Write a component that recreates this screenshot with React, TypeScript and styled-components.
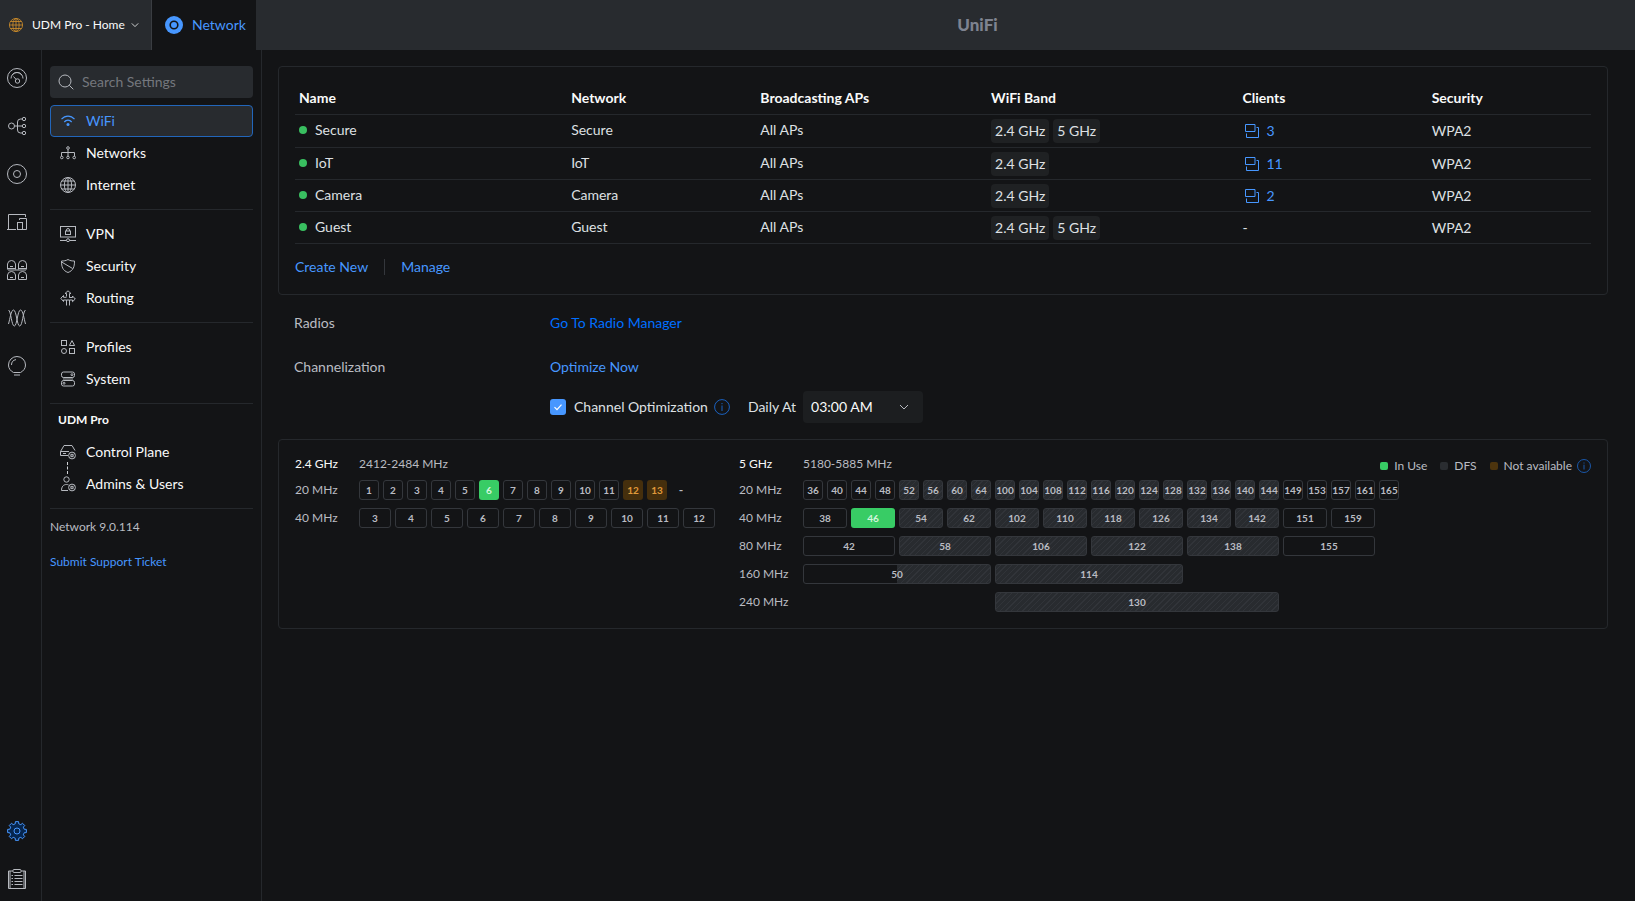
import React from "react";
import styled, { createGlobalStyle, css } from "styled-components";

const color = {
  bg: "#131416",
  bar: "#282b2f",
  line: "#25282c",
  text: "#f9fafa",
  textSoft: "#dee0e3",
  muted: "#babcc2",
  link: "#4797ff",
  linkDeep: "#006fff",
  green: "#38cc65",
  icon: "#b6b9bf",
};

const GlobalStyle = createGlobalStyle`
  *, *::before, *::after { box-sizing: border-box; }
  body {
    margin: 0;
    background: ${color.bg};
    color: ${color.textSoft};
    font-family: Lato, "Noto Sans", sans-serif;
    font-size: 14px;
    line-height: 20px;
  }
  button, input, select { font: inherit; color: inherit; }
  button { background: none; border: 0; padding: 0; cursor: pointer; }
  a { color: ${color.link}; text-decoration: none; }
`;

/* ---------- icons ---------- */

const Glyph = styled.svg`
  display: block;
  flex: none;
  fill: none;
  stroke: currentColor;
  stroke-width: 1;
`;

type IconProps = { size?: number; children?: React.ReactNode };

const Icon = ({ size = 20, children }: IconProps) => (
  <Glyph width={size} height={size} viewBox={`0 0 ${size} ${size}`} aria-hidden="true">
    {children}
  </Glyph>
);

const GlobeIcon = ({ size = 16 }: { size?: number }) => (
  <Glyph width={size} height={size} viewBox="0 0 16 16" aria-hidden="true">
    <circle cx="8" cy="8" r="7.5" />
    <ellipse cx="8" cy="8" rx="3.6" ry="7.5" />
    <path d="M8 .5v15M.5 8h15M1.8 4h12.4M1.8 12h12.4" />
  </Glyph>
);

const ChevronIcon = ({ size = 10 }: { size?: number }) => (
  <Glyph width={size} height={size} viewBox="0 0 10 10" aria-hidden="true">
    <path d="M1 3l4 4 4-4" />
  </Glyph>
);

const NetworkAppIcon = () => (
  <Icon size={18}>
    <circle cx="9" cy="9" r="9" fill={color.link} stroke="none" />
    <circle cx="9" cy="9" r="3.8" stroke={color.bg} strokeWidth="1.6" />
  </Icon>
);

const DashboardIcon = () => (
  <Icon>
    <circle cx="10" cy="10" r="9.5" />
    <path d="M4 10.5a6 6 0 0 1 12 0M5 7.2c2.4-3.600 7.600-3.600 10 0" />
    <circle cx="10.5" cy="13" r="2.2" />
    <path d="M9 11.3L6.5 8.5" />
  </Icon>
);

const TopologyIcon = () => (
  <Icon>
    <circle cx="4.5" cy="10" r="3" />
    <circle cx="17" cy="3" r="1.7" />
    <circle cx="17" cy="10" r="1.7" />
    <circle cx="17" cy="17" r="1.7" />
    <path d="M7.5 10h7.8M15.3 3h-1.8q-3 0-3 3v8q0 3 3 3h1.8" />
  </Icon>
);

const DevicesIcon = () => (
  <Icon>
    <circle cx="10" cy="10" r="9.5" />
    <circle cx="10" cy="10" r="3.5" />
  </Icon>
);

const ClientsIcon = () => (
  <Icon>
    <path d="M1.5 15V2.5h17V5M0 17.5h9M1.5 15v2.5" />
    <path d="M12.5 8V6.5h7v11H16" />
    <rect x="10.5" y="10.5" width="5" height="7" />
  </Icon>
);

const PortsIcon = () => (
  <Icon>
    {[0, 11].map((x) => (
      <g key={x} transform={`translate(${x} 0)`}>
        <path d="M.5 9.5V4Q1 .5 4.500 .5T8.500 4v5.500M.5 19.500V15q.5-3.500 4-3.500t4 3.500v4.500z" />
        <path d="M.5 8.500h8M3 6.500h3M3 17.500h3" />
      </g>
    ))}
    <path d="M1 10h18" strokeWidth="2" strokeOpacity=".5" />
  </Icon>
);

const RadiosIcon = () => (
  <Icon>
    <path d="M1.5 2C4 3 4.500 18 7.300 18S10.500 2 13.500 2c2.500 0 3.500 9 5 14" />
    <path d="M18.500 2C16 3 15.500 18 12.700 18S9.500 2 6.500 2C4 2 3 11 1.500 16" />
  </Icon>
);

const BulbIcon = () => (
  <Icon>
    <path d="M6.5 16.5C3.5 15 1.5 12.3 1.5 9a8.5 8.5 0 0 1 17 0c0 3.3-2 6-5 7.500zM7 19h6M4.500 9A5.500 5.500 0 0 1 9 3.600" />
  </Icon>
);

const gearPath = (() => {
  const teeth = 8;
  const pts: string[] = [];
  for (let i = 0; i < teeth; i++) {
    const mid = (i * 2 * Math.PI) / teeth;
    [[-0.24, 7.4], [-0.17, 9.5], [0.17, 9.5], [0.24, 7.4]].forEach(([offset, radius]) => {
      const a = mid + offset;
      pts.push(`${(10 + radius * Math.sin(a)).toFixed(2)} ${(10 - radius * Math.cos(a)).toFixed(2)}`);
    });
  }
  return `M${pts.join("L")}Z`;
})();

const GearIcon = () => (
  <Icon>
    <path d={gearPath} fill="#06264f" strokeLinejoin="round" />
    <circle cx="10" cy="10" r="3" />
  </Icon>
);

const ClipboardIcon = () => (
  <Icon>
    <path d="M6 2H1.5v17.5h17V2H14M3 2v17M17 2v17" />
    <rect x="6" y=".5" width="8" height="3" rx="1" />
    <path d="M4.5 6.5H6M7.5 6.5h8M4.5 9.5H6M7.5 9.5h8M4.5 12.5H6M7.5 12.5h8M4.5 15.5H6M7.5 15.5h8" />
  </Icon>
);

const SearchIcon = () => (
  <Icon size={16}>
    <circle cx="7" cy="7" r="6" />
    <path d="M11.3 11.3l4 4" />
  </Icon>
);

const WifiIcon = () => (
  <Icon size={16}>
    <path d="M1.5 6.2c3.600-4.200 9.400-4.200 13 0M4.300 9c2-2.400 5.400-2.400 7.400 0" strokeWidth="1.2" />
    <circle cx="8" cy="11.5" r="1.5" fill="currentColor" stroke="none" />
  </Icon>
);

const NetworksIcon = () => (
  <Icon size={16}>
    <circle cx="8" cy="3" r="1.3" />
    <circle cx="1.8" cy="12.5" r="1.3" />
    <circle cx="8" cy="12.5" r="1.3" />
    <circle cx="14.2" cy="12.5" r="1.3" />
    <path d="M8 4.3v6.900M1.500 11.200V7.500h13v3.700" />
  </Icon>
);

const VpnIcon = () => (
  <Icon size={16}>
    <rect x=".5" y=".5" width="15" height="10.5" />
    <rect x="5.5" y="5" width="5" height="3.5" />
    <path d="M6.5 5V4a1.5 1.5 0 0 1 3 0v1M0 14.500h6.300M9.700 14.500H16" />
    <circle cx="8" cy="14.2" r="1.5" />
  </Icon>
);

const ShieldIcon = () => (
  <Icon size={16}>
    <path d="M8 1.5c2 1.3 4.2 1.5 6.500 1.500 0 6-1.200 9.500-6.500 11.500C2.700 12.500 1.500 9 1.500 3 3.800 3 6 2.800 8 1.500zM1.600 4l11 6.500" />
  </Icon>
);

const RoutingIcon = () => (
  <Icon size={16}>
    <path d="M6.5 6.5V3.5H5L8 .8l3 2.700H9.500v4h3V6L15.300 9l-2.800 2.700v-1.700H9.500v5.500M6.500 15.500V10h-3v1.500L.8 8.300l2.700-2.800v1.800h3M6.500 10h3M9.500 7.500H12" />
  </Icon>
);

const ProfilesIcon = () => (
  <Icon size={16}>
    <rect x="1.5" y="1.5" width="5" height="5" />
    <path d="M12 1.6l2.6 4.900H9.400z" />
    <circle cx="4" cy="12" r="2.5" />
    <rect x="9.5" y="9.5" width="5" height="5" />
  </Icon>
);

const SystemIcon = () => (
  <Icon size={16}>
    <rect x="1.5" y="1" width="13" height="5.5" rx="2" />
    <rect x="1.5" y="9.5" width="13" height="5.5" rx="2" />
    <circle cx="12" cy="3.7" r="1" />
    <circle cx="4" cy="12.2" r="1" />
    <path d="M3.5 6.5h9v3h-9z" fill="currentColor" fillOpacity=".4" strokeOpacity=".3" />
  </Icon>
);

const SmallGear = () => (
  <>
    <circle cx="12" cy="11.5" r="3.4" />
    <circle cx="12" cy="11.5" r="1.3" />
    <path d="M9 9l6 5M9 14l6-5" strokeOpacity=".4" />
  </>
);

const ControlPlaneIcon = () => (
  <Icon size={16}>
    <path d="M8 11.5H.5v-4L4 1.500h8l3 5M.5 7.500H9M3 9.500h3" />
    <SmallGear />
  </Icon>
);

const AdminsIcon = () => (
  <Icon size={16}>
    <circle cx="6.5" cy="3.5" r="2.7" />
    <path d="M8 14.5H1.5c0-4 2-6 5-6 .8 0 1.500.1 2 .4" />
    <SmallGear />
  </Icon>
);

const WindowsIcon = () => (
  <Icon size={14}>
    <path d="M.5.5h9.500v7H.500z" />
    <path d="M11.500 3.500h2v10H1.500v-4" />
  </Icon>
);

const InfoIcon = ({ size = 16 }: { size?: number }) => (
  <Glyph width={size} height={size} viewBox="0 0 16 16" aria-hidden="true">
    <circle cx="8" cy="8" r="7.4" />
    <path d="M8 6.5V12M8 4v1.2" />
  </Glyph>
);

/* ---------- header ---------- */

const Page = styled.div`
  display: flex;
  flex-direction: column;
  min-height: 100vh;
`;

const TopBar = styled.header`
  display: flex;
  height: 50px;
  flex: none;
  background: ${color.bar};
`;

const SiteSwitcher = styled.button`
  display: flex;
  align-items: center;
  width: 152px;
  padding: 0 12px 0 9px;
  border-right: 1px solid #3a3d42;
  font-size: 12px;
  white-space: nowrap;
  color: ${color.text};
  span { margin: 0 auto 0 9px; }
`;

const Orange = styled.i`
  color: #c98a2c;
`;

const AppTab = styled.a`
  display: flex;
  align-items: center;
  gap: 9px;
  width: 104px;
  padding-left: 13px;
  background: ${color.bg};
`;

const Brand = styled.div`
  display: flex;
  flex: 1;
  align-items: center;
  justify-content: center;
  padding-left: 64px;
  color: #7e8390;
  font-size: 17px;
  font-weight: 900;
`;

/* ---------- navigation ---------- */

const Body = styled.div`
  display: flex;
  flex: 1;
`;

const Rail = styled.nav`
  display: flex;
  flex: none;
  flex-direction: column;
  gap: 4px;
  width: 42px;
  padding-top: 6px;
  border-right: 1px solid ${color.line};
`;

const RailButton = styled.button<{ $active?: boolean; $pushDown?: boolean }>`
  display: flex;
  align-items: center;
  height: 44px;
  padding-left: 7px;
  color: ${(p) => (p.$active ? color.link : color.icon)};
  ${(p) => p.$pushDown && css`margin-top: auto;`}
`;

const Sidebar = styled.nav`
  flex: none;
  width: 220px;
  padding: 16px 8px;
  border-right: 1px solid ${color.line};
`;

const SearchBox = styled.label`
  display: flex;
  align-items: center;
  gap: 8px;
  height: 32px;
  margin-bottom: 7px;
  padding: 0 8px;
  border-radius: 4px;
  background: ${color.bar};
  color: ${color.icon};
`;

const SearchInput = styled.input`
  min-width: 0;
  flex: 1;
  padding: 0;
  border: 0;
  outline: 0;
  background: none;
  color: ${color.text};
  &::placeholder { color: #74777d; opacity: 1; }
`;

const NavItem = styled.a<{ $active?: boolean }>`
  display: flex;
  align-items: center;
  gap: 10px;
  height: 32px;
  padding-left: 9px;
  border: 1px solid transparent;
  border-radius: 4px;
  color: ${color.text};
  svg { color: ${color.icon}; }
  ${(p) =>
    p.$active &&
    css`
      border-color: #2266bb;
      background: ${color.bar};
      color: ${color.link};
      svg { color: ${color.link}; }
    `}
`;

const NavDivider = styled.hr`
  height: 1px;
  margin: 8px 0;
  border: 0;
  background: ${color.line};
`;

const NavHeading = styled.h2`
  margin: 0 8px 8px;
  font-size: 12px;
  line-height: 16px;
  color: ${color.text};
`;

const LinkedItems = styled.div`
  position: relative;
  &::after {
    content: "";
    position: absolute;
    left: 17px;
    top: 26px;
    height: 12px;
    border-left: 1px dashed #d0d2d6;
  }
`;

const Version = styled.p`
  margin: 0 0 14px;
  font-size: 12px;
  color: ${color.muted};
`;

const SupportLink = styled.a`
  font-size: 12px;
`;

/* ---------- content ---------- */

const Main = styled.main`
  flex: 1;
  min-width: 0;
  padding: 16px 27px 16px 16px;
`;

const Panel = styled.section`
  padding: 16px;
  border: 1px solid ${color.line};
  border-radius: 4px;
`;

const WifiTable = styled.table`
  width: 100%;
  border-collapse: separate;
  border-spacing: 0;
  table-layout: fixed;
  th, td {
    height: 32px;
    padding: 0 4px;
    border-bottom: 1px solid ${color.line};
    text-align: left;
    white-space: nowrap;
  }
  th, td:nth-child(-n + 3) { padding-bottom: 2px; }
  th { color: ${color.text}; }
  tbody tr:first-child td { height: 33px; }
`;

const Status = styled.span`
  display: flex;
  align-items: center;
  gap: 8px;
  &::before {
    content: "";
    width: 8px;
    height: 8px;
    border-radius: 50%;
    background: #39bf60;
  }
`;

const Badges = styled.span`
  display: flex;
  gap: 4px;
`;

const Badge = styled.span`
  padding: 2px 4px;
  border-radius: 4px;
  background: #1f2123;
`;

const ClientLink = styled.a`
  display: flex;
  align-items: center;
  gap: 7px;
  padding-left: 3px;
`;

const PanelActions = styled.div`
  display: flex;
  align-items: center;
  height: 22px;
  margin-top: 12px;
`;

const ActionButton = styled.button`
  color: ${color.link};
  & + & {
    margin-left: 16px;
    padding-left: 16px;
    border-left: 1px solid #34373c;
    line-height: 16px;
  }
`;

const Settings = styled.section`
  padding: 0 16px;
`;

const SettingRow = styled.div`
  display: flex;
  align-items: center;
  height: 44px;
  color: ${color.muted};
  &:first-child { margin-top: 6px; }
`;

const SettingLabel = styled.span`
  width: 256px;
`;

const RadioLink = styled.a`
  color: ${color.linkDeep};
`;

const OptionsRow = styled.div`
  display: flex;
  align-items: center;
  height: 32px;
  margin: 2px 0 16px 256px;
`;

const CheckLabel = styled.label`
  display: flex;
  align-items: center;
  gap: 8px;
`;

const CheckBox = styled.input`
  appearance: none;
  width: 16px;
  height: 16px;
  margin: 0;
  border-radius: 3px;
  background: ${color.link}
    url("data:image/svg+xml,%3Csvg xmlns='http://www.w3.org/2000/svg' width='16' height='16'%3E%3Cpath d='M4.500 8.200l2.500 2.500 4.500-5' fill='none' stroke='white' stroke-width='1.200'/%3E%3C/svg%3E");
`;

const InfoButton = styled.button`
  margin: 0 18px 0 6px;
  color: #1b62c0;
`;

const TimeField = styled.span`
  display: flex;
  align-items: center;
  margin-left: 7px;
  color: ${color.icon};
  svg { margin-left: -24px; pointer-events: none; }
`;

const TimeSelect = styled.select`
  appearance: none;
  width: 120px;
  height: 32px;
  padding: 0 8px;
  border: 0;
  border-radius: 4px;
  background: #1c1e20;
  color: ${color.text};
`;

/* ---------- channels ---------- */

const ChannelPanel = styled(Panel)`
  display: flex;
  gap: 24px;
  font-size: 12px;
`;

const Band = styled.div<{ $grow?: boolean }>`
  flex: ${(p) => (p.$grow ? "1" : "none")};
  min-width: ${(p) => (p.$grow ? "0" : "420px")};
`;

const BandHeader = styled.div`
  display: flex;
  align-items: center;
  height: 16px;
  margin-bottom: 8px;
  color: ${color.muted};
`;

const BandName = styled.strong`
  width: 64px;
  font-weight: 400;
  color: ${color.text};
`;

const ChannelRow = styled.div`
  display: flex;
  gap: 4px;
  height: 20px;
  color: ${color.muted};
  & + & { margin-top: 8px; }
`;

const RowLabel = styled.span`
  width: 60px;
  flex: none;
`;

type ChipKind = "open" | "used" | "blocked" | "dfs" | "half" | "plain" | "blank";

const stripes = "repeating-linear-gradient(135deg, #282b2f 0 3px, #313439 3px 4px)";

const chipLook: Record<ChipKind, ReturnType<typeof css>> = {
  open: css`border-color: #34373c;`,
  used: css`background: ${color.green}; color: #d3f5dc;`,
  blocked: css`background: #452f0d; color: #e09a3a;`,
  dfs: css`border-color: #34373c; background: ${stripes};`,
  half: css`border-color: #34373c; background: ${stripes} right / 50% 100% no-repeat;`,
  plain: css`font-size: 12px;`,
  blank: css`visibility: hidden;`,
};

const Chip = styled.span<{ $width: number; $kind: ChipKind }>`
  display: flex;
  flex: none;
  align-items: center;
  justify-content: center;
  width: ${(p) => p.$width}px;
  height: 20px;
  border: 1px solid transparent;
  border-radius: 3px;
  font-size: 10px;
  font-weight: 700;
  line-height: 12px;
  ${(p) => chipLook[p.$kind]}
`;

const Legend = styled.div`
  display: flex;
  align-items: center;
  gap: 13px;
  margin-left: auto;
  padding-top: 4px;
`;

const LegendItem = styled.span<{ $fill: string }>`
  display: flex;
  align-items: center;
  gap: 6px;
  &::before {
    content: "";
    width: 8px;
    height: 8px;
    border-radius: 2px;
    background: ${(p) => p.$fill};
  }
`;

const LegendInfo = styled.button`
  margin-left: -8px;
  color: #1b62c0;
`;

type ChannelLine = { label: string; width: number; chips: [string, ChipKind][] };

const chips = (names: string, kind: ChipKind): [string, ChipKind][] =>
  names.split(" ").map((name) => [name, kind]);

const band24: ChannelLine[] = [
  {
    label: "20 MHz",
    width: 20,
    chips: [
      ...chips("1 2 3 4 5", "open"),
      ...chips("6", "used"),
      ...chips("7 8 9 10 11", "open"),
      ...chips("12 13", "blocked"),
      ...chips("-", "plain"),
    ],
  },
  { label: "40 MHz", width: 32, chips: chips("3 4 5 6 7 8 9 10 11 12", "open") },
];

const band5: ChannelLine[] = [
  {
    label: "20 MHz",
    width: 20,
    chips: [
      ...chips("36 40 44 48", "open"),
      ...chips("52 56 60 64 100 104 108 112 116 120 124 128 132 136 140 144", "dfs"),
      ...chips("149 153 157 161 165", "open"),
    ],
  },
  {
    label: "40 MHz",
    width: 44,
    chips: [
      ...chips("38", "open"),
      ...chips("46", "used"),
      ...chips("54 62 102 110 118 126 134 142", "dfs"),
      ...chips("151 159", "open"),
    ],
  },
  {
    label: "80 MHz",
    width: 92,
    chips: [...chips("42", "open"), ...chips("58 106 122 138", "dfs"), ...chips("155", "open")],
  },
  { label: "160 MHz", width: 188, chips: [["50", "half"], ["114", "dfs"]] },
  { label: "240 MHz", width: 284, chips: [["", "blank"], ["130", "dfs"]] },
];

const Channels = ({ lines }: { lines: ChannelLine[] }) => (
  <>
    {lines.map((line) => (
      <ChannelRow key={line.label}>
        <RowLabel>{line.label}</RowLabel>
        {line.chips.map(([name, kind]) => (
          <Chip key={name} $width={kind === "blank" ? 188 : line.width} $kind={kind}>
            {name}
          </Chip>
        ))}
      </ChannelRow>
    ))}
  </>
);

/* ---------- data ---------- */

const railItems = [
  { label: "Dashboard", icon: <DashboardIcon /> },
  { label: "Topology", icon: <TopologyIcon /> },
  { label: "Devices", icon: <DevicesIcon /> },
  { label: "Clients", icon: <ClientsIcon /> },
  { label: "Ports", icon: <PortsIcon /> },
  { label: "Radios", icon: <RadiosIcon /> },
  { label: "Insights", icon: <BulbIcon /> },
  { label: "Settings", icon: <GearIcon />, active: true, pushDown: true },
  { label: "System log", icon: <ClipboardIcon /> },
];

const navGroups = [
  [
    { label: "WiFi", icon: <WifiIcon />, active: true },
    { label: "Networks", icon: <NetworksIcon /> },
    { label: "Internet", icon: <GlobeIcon /> },
  ],
  [
    { label: "VPN", icon: <VpnIcon /> },
    { label: "Security", icon: <ShieldIcon /> },
    { label: "Routing", icon: <RoutingIcon /> },
  ],
  [
    { label: "Profiles", icon: <ProfilesIcon /> },
    { label: "System", icon: <SystemIcon /> },
  ],
];

const columns = [
  { title: "Name", width: "21%" },
  { title: "Network", width: "14.6%" },
  { title: "Broadcasting APs", width: "17.8%" },
  { title: "WiFi Band", width: "19.4%" },
  { title: "Clients", width: "14.6%" },
  { title: "Security", width: "12.6%" },
];

const networks = [
  { name: "Secure", bands: ["2.4 GHz", "5 GHz"], clients: 3 },
  { name: "IoT", bands: ["2.4 GHz"], clients: 11 },
  { name: "Camera", bands: ["2.4 GHz"], clients: 2 },
  { name: "Guest", bands: ["2.4 GHz", "5 GHz"], clients: 0 },
];

export default function App() {
  return (
    <Page>
      <GlobalStyle />
      <TopBar>
        <SiteSwitcher type="button">
          <Orange><GlobeIcon size={14} /></Orange>
          <span>UDM Pro - Home</span>
          <ChevronIcon size={8} />
        </SiteSwitcher>
        <AppTab href="#network">
          <NetworkAppIcon />
          Network
        </AppTab>
        <Brand>UniFi</Brand>
      </TopBar>
      <Body>
        <Rail aria-label="Application">
          {railItems.map((item) => (
            <RailButton
              key={item.label}
              type="button"
              aria-label={item.label}
              $active={item.active}
              $pushDown={item.pushDown}
            >
              {item.icon}
            </RailButton>
          ))}
        </Rail>
        <Sidebar aria-label="Settings">
          <SearchBox>
            <SearchIcon />
            <SearchInput type="text" placeholder="Search Settings" aria-label="Search Settings" />
          </SearchBox>
          {navGroups.map((group) => (
            <React.Fragment key={group[0].label}>
              {group.map((item) => (
                <NavItem key={item.label} href={`#${item.label.toLowerCase()}`} $active={"active" in item}>
                  {item.icon}
                  {item.label}
                </NavItem>
              ))}
              <NavDivider />
            </React.Fragment>
          ))}
          <NavHeading>UDM Pro</NavHeading>
          <LinkedItems>
            <NavItem href="#control-plane">
              <ControlPlaneIcon />
              Control Plane
            </NavItem>
            <NavItem href="#admins">
              <AdminsIcon />
              Admins &amp; Users
            </NavItem>
          </LinkedItems>
          <NavDivider />
          <Version>Network 9.0.114</Version>
          <SupportLink href="#support">Submit Support Ticket</SupportLink>
        </Sidebar>
        <Main>
          <Panel>
            <WifiTable>
              <colgroup>
                {columns.map((c) => (
                  <col key={c.title} width={c.width} />
                ))}
              </colgroup>
              <thead>
                <tr>
                  {columns.map((c) => (
                    <th key={c.title} scope="col">{c.title}</th>
                  ))}
                </tr>
              </thead>
              <tbody>
                {networks.map((n) => (
                  <tr key={n.name}>
                    <td><Status>{n.name}</Status></td>
                    <td>{n.name}</td>
                    <td>All APs</td>
                    <td>
                      <Badges>
                        {n.bands.map((b) => (
                          <Badge key={b}>{b}</Badge>
                        ))}
                      </Badges>
                    </td>
                    <td>
                      {n.clients ? (
                        <ClientLink href="#clients">
                          <WindowsIcon />
                          {n.clients}
                        </ClientLink>
                      ) : (
                        "-"
                      )}
                    </td>
                    <td>WPA2</td>
                  </tr>
                ))}
              </tbody>
            </WifiTable>
            <PanelActions>
              <ActionButton type="button">Create New</ActionButton>
              <ActionButton type="button">Manage</ActionButton>
            </PanelActions>
          </Panel>
          <Settings>
            <SettingRow>
              <SettingLabel>Radios</SettingLabel>
              <RadioLink href="#radio-manager">Go To Radio Manager</RadioLink>
            </SettingRow>
            <SettingRow>
              <SettingLabel>Channelization</SettingLabel>
              <ActionButton type="button">Optimize Now</ActionButton>
            </SettingRow>
            <OptionsRow>
              <CheckLabel>
                <CheckBox type="checkbox" defaultChecked />
                Channel Optimization
              </CheckLabel>
              <InfoButton type="button" aria-label="About channel optimization">
                <InfoIcon />
              </InfoButton>
              <label htmlFor="daily-at">Daily At</label>
              <TimeField>
                <TimeSelect id="daily-at" defaultValue="03:00 AM">
                  <option>03:00 AM</option>
                </TimeSelect>
                <ChevronIcon />
              </TimeField>
            </OptionsRow>
          </Settings>
          <ChannelPanel>
            <Band>
              <BandHeader>
                <BandName>2.4 GHz</BandName>
                2412-2484 MHz
              </BandHeader>
              <Channels lines={band24} />
            </Band>
            <Band $grow>
              <BandHeader>
                <BandName>5 GHz</BandName>
                5180-5885 MHz
                <Legend>
                  <LegendItem $fill={color.green}>In Use</LegendItem>
                  <LegendItem $fill="#2a2d31">DFS</LegendItem>
                  <LegendItem $fill="#4c340e">Not available</LegendItem>
                  <LegendInfo type="button" aria-label="About channel availability">
                    <InfoIcon size={14} />
                  </LegendInfo>
                </Legend>
              </BandHeader>
              <Channels lines={band5} />
            </Band>
          </ChannelPanel>
        </Main>
      </Body>
    </Page>
  );
}
